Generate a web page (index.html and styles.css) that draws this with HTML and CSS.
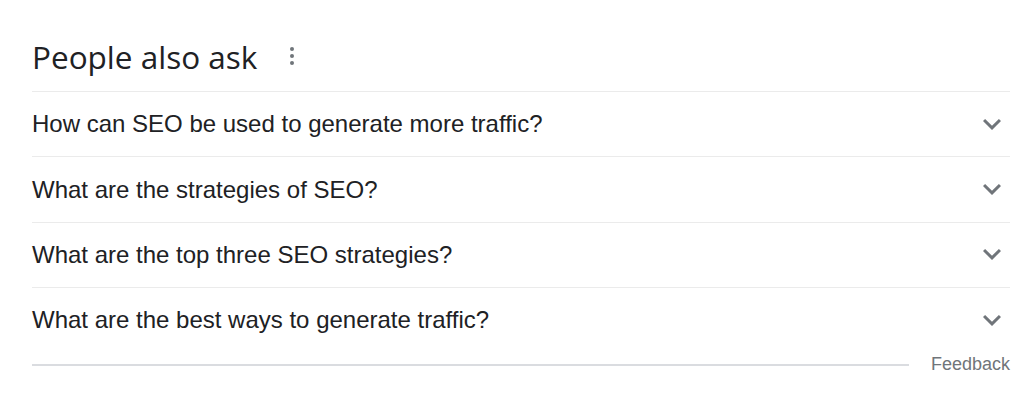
FILE: index.html
```html
<!DOCTYPE html>
<html>
<head>
<meta charset="utf-8">
<link rel="stylesheet" href="styles.css">
</head>
<body>
<div class="paa">
  <div class="head">
    <h2 class="title">People also ask</h2>
    <svg class="more" width="24" height="24" viewBox="0 0 24 24"><circle cx="12" cy="5" r="2"/><circle cx="12" cy="12" r="2"/><circle cx="12" cy="19" r="2"/></svg>
  </div>
  <div class="list">
    <div class="row"><span class="q">How can SEO be used to generate more traffic?</span><svg class="chev" width="36" height="36" viewBox="0 0 24 24"><path d="M16.59 8.59L12 13.17 7.41 8.59 6 10l6 6 6-6z"/></svg></div>
    <div class="row"><span class="q">What are the strategies of SEO?</span><svg class="chev" width="36" height="36" viewBox="0 0 24 24"><path d="M16.59 8.59L12 13.17 7.41 8.59 6 10l6 6 6-6z"/></svg></div>
    <div class="row"><span class="q">What are the top three SEO strategies?</span><svg class="chev" width="36" height="36" viewBox="0 0 24 24"><path d="M16.59 8.59L12 13.17 7.41 8.59 6 10l6 6 6-6z"/></svg></div>
    <div class="row"><span class="q">What are the best ways to generate traffic?</span><svg class="chev" width="36" height="36" viewBox="0 0 24 24"><path d="M16.59 8.59L12 13.17 7.41 8.59 6 10l6 6 6-6z"/></svg></div>
  </div>
  <div class="foot">
    <div class="rule"></div>
    <span class="feedback">Feedback</span>
  </div>
</div>
</body>
</html>
```
FILE: styles.css
```css
html, body {
  margin: 0;
  padding: 0;
  background: #fff;
}
.paa {
  width: 978px;
  padding-left: 32px;
  font-family: "Liberation Sans", Arial, sans-serif;
  color: #202124;
}
.head {
  height: 91px;
  display: flex;
  align-items: flex-start;
  box-sizing: border-box;
  padding-top: 37px;
}
.title {
  margin: 0;
  font-family: "Open Sans", Roboto, sans-serif;
  font-weight: 400;
  font-size: 31.5px;
  line-height: 40px;
  color: #202124;
}
.more {
  fill: #70757a;
  margin-left: 23px;
  margin-top: 7px;
}
.row {
  box-sizing: border-box;
  height: 65.4px;
  border-top: 1px solid #ebebeb;
  display: flex;
  align-items: center;
  justify-content: space-between;
}
.q {
  font-size: 24px;
  line-height: 30px;
}
.chev {
  fill: #70757a;
  margin-top: -1px;
}
.foot {
  display: flex;
  align-items: center;
  height: 24px;
  margin-top: 0px;
}
.rule {
  flex: 1;
  height: 2px;
  background: #dadce0;
}
.feedback {
  margin-left: 22px;
  font-size: 18px;
  color: #70757a;
}
```
